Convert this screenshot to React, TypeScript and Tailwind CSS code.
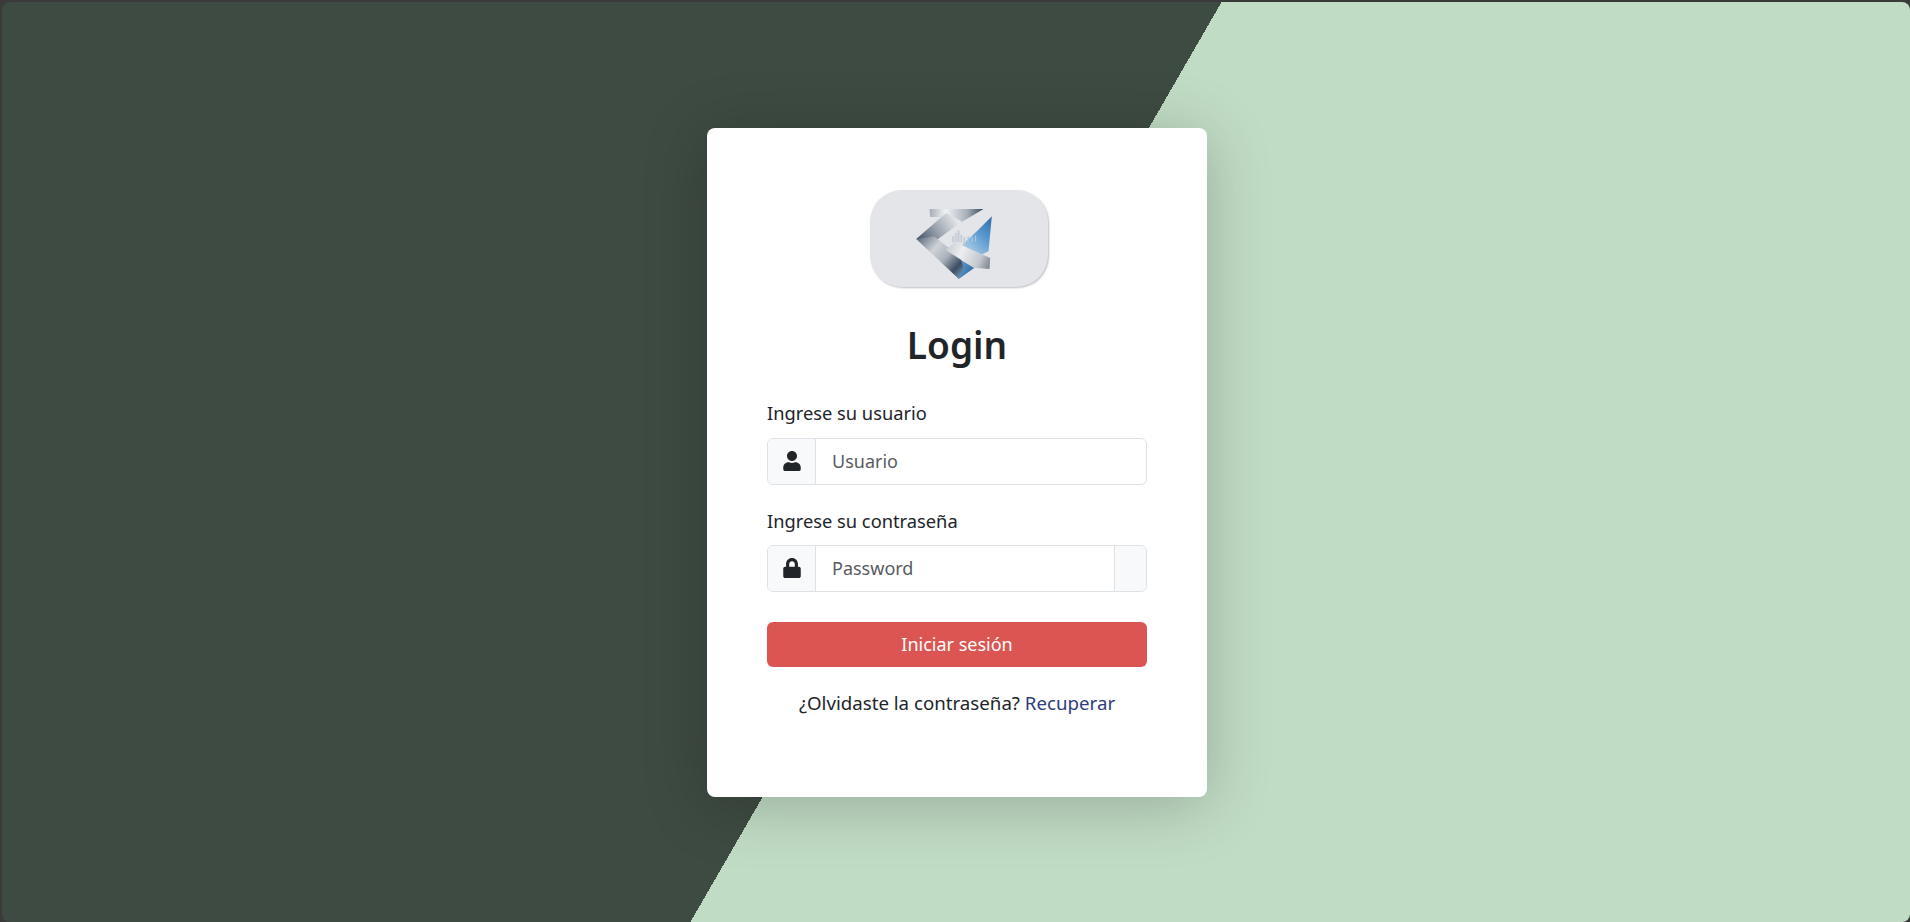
import { FaUser, FaLock } from 'react-icons/fa';

// Logo del login, dibujado a mano con degradados metálicos
function Logo() {
  return (
    <svg width="77" height="71" viewBox="165 85 230 213" className="blur-[0.5px]">
      <defs>
        <linearGradient id="arm" gradientUnits="userSpaceOnUse" x1="170" y1="175" x2="300" y2="290">
          <stop offset="0" stopColor="#5a6879" />
          <stop offset="0.35" stopColor="#cfd3d8" />
          <stop offset="0.6" stopColor="#aab1ba" />
          <stop offset="0.85" stopColor="#3c4c62" />
          <stop offset="1" stopColor="#6c8cab" />
        </linearGradient>
        <linearGradient id="upper" gradientUnits="userSpaceOnUse" x1="175" y1="180" x2="290" y2="105">
          <stop offset="0" stopColor="#46556a" />
          <stop offset="0.45" stopColor="#9aa3ae" />
          <stop offset="1" stopColor="#eef0f2" />
        </linearGradient>
        <linearGradient id="top" gradientUnits="userSpaceOnUse" x1="208" y1="90" x2="370" y2="90">
          <stop offset="0" stopColor="#a6adb7" />
          <stop offset="0.3" stopColor="#f1f2f4" />
          <stop offset="0.7" stopColor="#a7aeb8" />
          <stop offset="1" stopColor="#35445a" />
        </linearGradient>
        <linearGradient id="blue" gradientUnits="userSpaceOnUse" x1="310" y1="200" x2="395" y2="110">
          <stop offset="0" stopColor="#a9c9e4" />
          <stop offset="0.5" stopColor="#5b9ad0" />
          <stop offset="1" stopColor="#2b6ca6" />
        </linearGradient>
        <linearGradient id="blueLow" gradientUnits="userSpaceOnUse" x1="270" y1="255" x2="340" y2="285">
          <stop offset="0" stopColor="#7fb1db" />
          <stop offset="1" stopColor="#2a6aa3" />
        </linearGradient>
        <linearGradient id="band" gradientUnits="userSpaceOnUse" x1="255" y1="200" x2="390" y2="260">
          <stop offset="0" stopColor="#c5c9cf" />
          <stop offset="0.35" stopColor="#eceef0" />
          <stop offset="0.75" stopColor="#c4c8ce" />
          <stop offset="1" stopColor="#7b838e" />
        </linearGradient>
      </defs>
      <path d="M395 110 L385 215 L350 232 L306 196 L350 155 Z" fill="url(#blue)" />
      <path d="M262 250 L296 298 L345 263 L300 240 Z" fill="url(#blueLow)" />
      <path d="M208 88 L370 88 L300 130 L258 112 L210 112 Z" fill="url(#top)" />
      <path d="M258 100 L305 126 L222 186 L168 178 Z" fill="url(#upper)" />
      <path d="M168 178 L222 170 L300 232 L310 262 L296 298 Z" fill="url(#arm)" />
      <path d="M255 210 L285 188 L390 235 L388 268 L340 264 Z" fill="url(#band)" />
      <g fill="#c3cbd4">
        <rect x="276" y="170" width="5" height="18" />
        <rect x="284" y="160" width="5" height="28" />
        <rect x="292" y="152" width="6" height="36" />
        <rect x="301" y="165" width="5" height="24" />
        <rect x="310" y="172" width="5" height="22" />
        <rect x="322" y="170" width="4" height="18" fill="#a4c7e3" />
        <rect x="334" y="172" width="4" height="16" fill="#a4c7e3" />
        <rect x="344" y="168" width="4" height="18" fill="#a4c7e3" />
      </g>
    </svg>
  );
}

export default function App() {
  return (
    <div className="h-[922px] overflow-hidden bg-[#3a3a3a] pl-[2px] pt-[2px] font-['Segoe_UI','Noto_Sans',sans-serif] text-lg text-[#212529]">
      <div className="flex h-full items-center justify-center overflow-hidden rounded-lg bg-[linear-gradient(120deg,#3e4b42_50%,#c1dcc5_50%)] pl-[2px]">
        <div className="w-[500px] rounded-lg bg-white px-[60px] pb-[81px] pt-[62px] shadow-[0_8px_64px_rgba(0,0,0,0.22)]">
          <div className="flex justify-center pl-1">
            <div className="flex h-[97px] w-[178px] items-center justify-center rounded-[32px] bg-[#e4e5e9] pr-3 pt-[10px] shadow-[1px_1px_2px_rgba(0,0,0,0.25)]">
              <Logo />
            </div>
          </div>
          <h1 className="mt-[34px] text-center text-[37px] leading-[48px] font-semibold">Login</h1>
          <form className="mt-[30px]">
            <label className="mb-3 block text-[18.3px] leading-[27px]">Ingrese su usuario</label>
            <div className="flex h-[47px] rounded-md border border-[#dee2e6]">
              <span className="flex w-12 items-center justify-center rounded-l-md border-r border-[#dee2e6] bg-[#f8f9fa]">
                <FaUser className="h-5 w-5" />
              </span>
              <input placeholder="Usuario" className="min-w-0 flex-1 rounded-r-md px-4 outline-none placeholder:text-[#595c5f]" />
            </div>
            <label className="mb-[11px] mt-[22px] block text-[18.3px] leading-[27px]">Ingrese su contraseña</label>
            <div className="flex h-[47px] rounded-md border border-[#dee2e6]">
              <span className="flex w-12 items-center justify-center rounded-l-md border-r border-[#dee2e6] bg-[#f8f9fa]">
                <FaLock className="h-5 w-5" />
              </span>
              <input placeholder="Password" className="min-w-0 flex-1 px-4 outline-none placeholder:text-[#595c5f]" />
              <span className="w-8 rounded-r-md border-l border-[#dee2e6] bg-[#f8f9fa]" />
            </div>
            <button type="button" className="mt-[30px] h-[45px] w-full rounded-md bg-[#db5552] text-white">
              Iniciar sesión
            </button>
            <p className="mt-[22px] text-center text-[18.7px] leading-[27px]">
              ¿Olvidaste la contraseña? <a className="text-[#2f3d7c]">Recuperar</a>
            </p>
          </form>
        </div>
      </div>
    </div>
  );
}
